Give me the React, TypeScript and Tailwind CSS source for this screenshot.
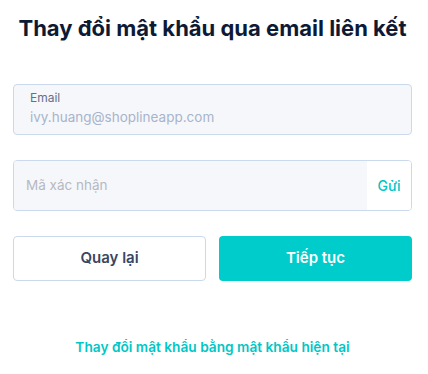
export default function App() {
  return (
    <div className="min-h-screen bg-white pl-[13px] pr-[16px] pt-[13px] font-['Inter',sans-serif]">
      <h1 className="text-center text-[22px] font-bold leading-[30px] text-[#0d1a36]">
        Thay đổi mật khẩu qua email liên kết
      </h1>

      {/* Email (readonly) */}
      <div className="mt-[41px] h-[51px] rounded-[4px] border border-[#cbd9ec] bg-[#f6f7fb] px-4 pt-[5px]">
        <div className="text-[12px] leading-[16px] text-[#63708c]">Email</div>
        <div className="text-[13.5px] leading-[22px] text-[#a8b4ca]">ivy.huang@shoplineapp.com</div>
      </div>

      {/* Verification code */}
      <div className="mt-[25px] flex h-[51px] overflow-hidden rounded-[4px] border border-[#cbd9ec]">
        <input
          className="min-w-0 flex-1 bg-[#f6f7fb] px-3 text-[13.5px] text-[#333] outline-none placeholder:text-[#b5b9c2]"
          placeholder="Mã xác nhận"
        />
        <button className="w-[44px] bg-white text-[14px] font-medium text-[#00c7c6]">Gửi</button>
      </div>

      <div className="mt-[25px] grid grid-cols-2 gap-[13px]">
        <button className="h-[45px] rounded-[4px] border border-[#cbd9ec] bg-white text-[15px] font-semibold text-[#3b4661]">
          Quay lại
        </button>
        <button className="h-[45px] rounded-[4px] bg-[#00cdcb] text-[15px] font-semibold text-white">
          Tiếp tục
        </button>
      </div>

      <div className="mt-[53px] text-center">
        <a className="text-[13.7px] font-semibold text-[#00c7c6]">Thay đổi mật khẩu bằng mật khẩu hiện tại</a>
      </div>
    </div>
  )
}
